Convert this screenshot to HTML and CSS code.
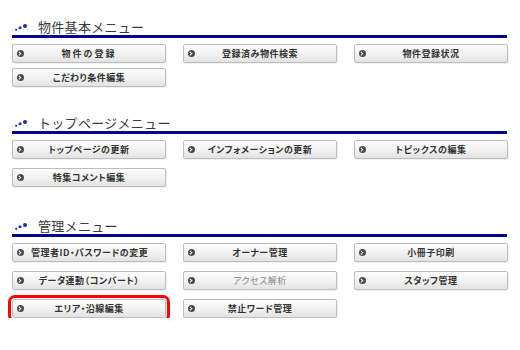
FILE: index.html
```html
<!DOCTYPE html>
<html lang="ja">
<head>
    <meta charset="UTF-8">
    <title>管理メニュー</title>
    <link rel="stylesheet" href="styles.css">
</head>
<body>

<div class="menu-page">

    <!-- 物件基本メニュー -->
    <section class="menu-section first">
        <h2 class="menu-title">
            <svg class="title-dots" width="12" height="7" viewBox="0 0 12 7"><circle cx="1.2" cy="5.8" r="1.1"/><circle cx="5" cy="3.8" r="1.5"/><circle cx="10" cy="2" r="2"/></svg>
            物件基本メニュー
        </h2>
        <div class="menu-grid tight">
            <a class="menu-btn" href="#"><span class="btn-icon"></span><span class="wide">物件の登録</span></a>
            <a class="menu-btn" href="#"><span class="btn-icon"></span><span>登録済み物件検索</span></a>
            <a class="menu-btn" href="#"><span class="btn-icon"></span><span>物件登録状況</span></a>
            <a class="menu-btn" href="#"><span class="btn-icon"></span><span>こだわり条件編集</span></a>
        </div>
    </section>

    <!-- トップページメニュー -->
    <section class="menu-section">
        <h2 class="menu-title">
            <svg class="title-dots" width="12" height="7" viewBox="0 0 12 7"><circle cx="1.2" cy="5.8" r="1.1"/><circle cx="5" cy="3.8" r="1.5"/><circle cx="10" cy="2" r="2"/></svg>
            トップページメニュー
        </h2>
        <div class="menu-grid">
            <a class="menu-btn" href="#"><span class="btn-icon"></span><span>トップページの更新</span></a>
            <a class="menu-btn" href="#"><span class="btn-icon"></span><span>インフォメーションの更新</span></a>
            <a class="menu-btn" href="#"><span class="btn-icon"></span><span>トピックスの編集</span></a>
            <a class="menu-btn" href="#"><span class="btn-icon"></span><span>特集コメント編集</span></a>
        </div>
    </section>

    <!-- 管理メニュー -->
    <section class="menu-section last">
        <h2 class="menu-title">
            <svg class="title-dots" width="12" height="7" viewBox="0 0 12 7"><circle cx="1.2" cy="5.8" r="1.1"/><circle cx="5" cy="3.8" r="1.5"/><circle cx="10" cy="2" r="2"/></svg>
            管理メニュー
        </h2>
        <div class="menu-grid">
            <a class="menu-btn" href="#"><span class="btn-icon"></span><span>管理者ID・パスワードの変更</span></a>
            <a class="menu-btn" href="#"><span class="btn-icon"></span><span>オーナー管理</span></a>
            <a class="menu-btn" href="#"><span class="btn-icon"></span><span>小冊子印刷</span></a>
            <a class="menu-btn" href="#"><span class="btn-icon"></span><span>データ連動（コンバート）</span></a>
            <a class="menu-btn disabled" href="#"><span class="btn-icon"></span><span>アクセス解析</span></a>
            <a class="menu-btn" href="#"><span class="btn-icon"></span><span>スタッフ管理</span></a>
            <a class="menu-btn selected" href="#"><span class="btn-icon"></span><span>エリア・沿線編集</span></a>
            <a class="menu-btn" href="#"><span class="btn-icon"></span><span>禁止ワード管理</span></a>
        </div>
    </section>

</div>

</body>
</html>
```

FILE: styles.css
```css
body {
    font-family: "Noto Sans CJK JP", "Noto Sans", sans-serif;
    margin: 0;
    padding: 0;
    background-color: #fff;
    color: #333;
}

.menu-page {
    padding: 18px 13px 0 12px;
}

.menu-section {
    margin-top: 27px;
}

.menu-section.first {
    margin-top: 0;
}

.menu-section.last {
    margin-top: 30px;
}

/* Section headline with the blue rule */
.menu-title {
    display: flex;
    align-items: center;
    margin: 0;
    height: 17px;
    font-size: 13px;
    font-weight: normal;
    line-height: 17px;
    letter-spacing: 0.3px;
    color: #3a3a3a;
    border-bottom: 3px solid #00008f;
}

.title-dots {
    fill: #1a2fb0;
    margin: 0 11px 0 3px;
    position: relative;
    top: 1px;
}

/* Button grid */
.menu-grid {
    display: grid;
    grid-template-columns: repeat(3, 154px);
    column-gap: 17px;
    row-gap: 9px;
    margin-top: 6px;
}

.menu-grid.tight {
    row-gap: 5px;
}

.menu-btn {
    display: grid;
    grid-template-columns: 18px 1fr 18px;
    align-items: center;
    height: 19px;
    box-sizing: border-box;
    border: 1px solid #bdbdbd;
    border-radius: 2px;
    background: linear-gradient(#fdfdfd, #f1f1f1 55%, #e2e2e2);
    box-shadow: 1px 1px 0 rgba(0, 0, 0, 0.06);
    color: #333;
    font-size: 9px;
    font-weight: bold;
    font-feature-settings: "palt";
    letter-spacing: 0.5px;
    text-align: center;
    text-decoration: none;
    white-space: nowrap;
}

.menu-btn .wide {
    letter-spacing: 2px;
}

.btn-icon {
    width: 7px;
    height: 7px;
    margin-left: 4px;
    border-radius: 50%;
    background-color: #4a4a4a;
    position: relative;
}

/* little white chevron inside the circle */
.btn-icon::after {
    content: "";
    position: absolute;
    left: 1.2px;
    top: 2.2px;
    width: 1.6px;
    height: 1.6px;
    border-top: 1px solid #fff;
    border-right: 1px solid #fff;
    transform: rotate(45deg);
}

.menu-btn.disabled {
    color: #888;
    font-weight: normal;
}

.menu-btn.selected {
    outline: 3px solid #f00;
    outline-offset: 1px;
    border-radius: 3px;
}
```
